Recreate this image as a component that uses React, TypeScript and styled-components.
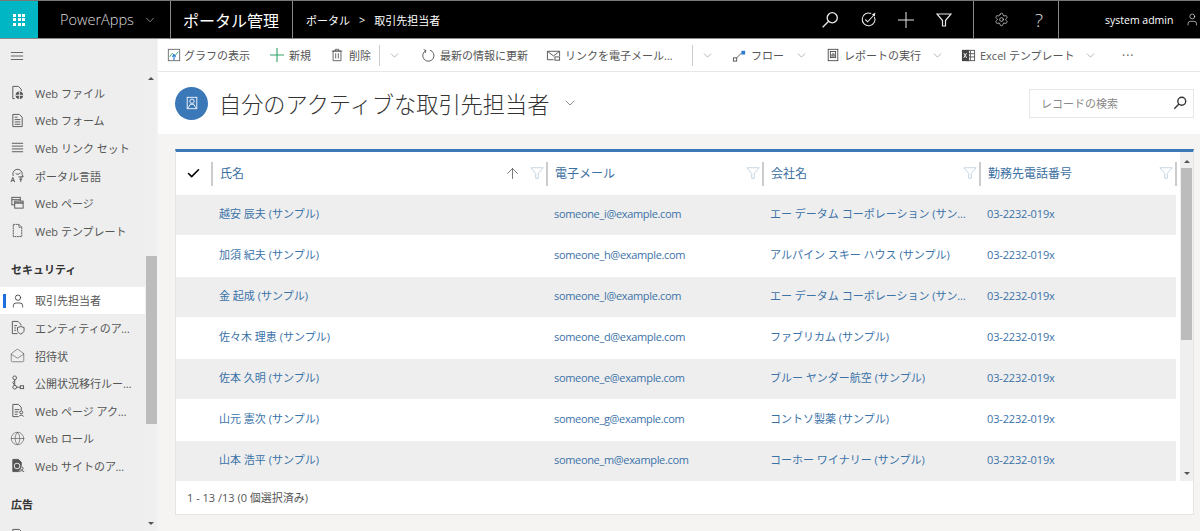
import React, { ReactElement, ReactNode } from 'react'
import styled, { createGlobalStyle } from 'styled-components'
import { ArrowUp, Check, ChevronDown, Globe, MailOpen, Settings, User } from 'lucide-react'

const FONT = `"Open Sans", "Noto Sans CJK JP", sans-serif`

const Global = createGlobalStyle`
  html, body { margin: 0; padding: 0; height: 100%; overflow: hidden; }
  body { font-family: ${FONT}; background: #f5f4f3; }
  * { box-sizing: border-box; }
`

const Page = styled.div`
  width: 1200px;
  height: 531px;
  display: flex;
  flex-direction: column;
  overflow: hidden;
`

// ---- top bar
const TopBar = styled.header`
  height: 39px;
  flex: none;
  display: flex;
  align-items: stretch;
  background: #000;
  color: #fff;
  border-top: 1px solid #777;
  border-bottom: 1px solid #888;
`
const Waffle = styled.div`
  width: 38px;
  background: #00b5c4;
  display: grid;
  grid-template-columns: repeat(3, 3px);
  grid-auto-rows: 3px;
  gap: 1.5px;
  place-content: center;
  i { background: #fff; }
`
const AppName = styled.div`
  width: 133px;
  padding-left: 22px;
  display: flex;
  align-items: center;
  gap: 9px;
  font-size: 14.5px;
  color: #ddd;
  font-weight: 300;
  border-right: 1px solid #888;
`
const PortalTitle = styled.div`
  width: 122px;
  padding-left: 12px;
  display: flex;
  align-items: center;
  font-size: 16px;
  border-right: 1px solid #888;
`
const Crumbs = styled.div`
  flex: 1;
  padding-left: 13px;
  display: flex;
  align-items: center;
  font-size: 11px;
  gap: 9px;
`
const TopIcons = styled.div<{ $w: number; $left: number; $right: number }>`
  width: ${p => p.$w}px;
  padding: 0 ${p => p.$right}px 0 ${p => p.$left}px;
  display: flex;
  align-items: center;
  justify-content: flex-end;
  border-right: 1px solid #888;
`
const TopBtn = styled.div`
  width: 38px;
  flex: none;
  display: flex;
  align-items: center;
  justify-content: center;
  color: #e8e8e8;
`
const Help = styled.span`
  font-size: 19px;
  font-weight: 300;
  color: #ddd;
`
const UserBox = styled.div`
  width: 141px;
  padding-left: 46px;
  display: flex;
  align-items: center;
  gap: 12px;
  font-size: 10.5px;
  white-space: nowrap;
`

// ---- body
const Body = styled.div`
  flex: 1;
  min-height: 0;
  display: flex;
`
const Sidebar = styled.nav`
  width: 158px;
  flex: none;
  display: flex;
  flex-direction: column;
  background: #eee;
  border-right: 1px solid #f5f4f3;
`
const Burger = styled.div`
  height: 33px;
  flex: none;
  padding-left: 10px;
  display: flex;
  align-items: center;
  color: #555;
`
const SideScroll = styled.div`
  flex: 1;
  min-height: 0;
  display: flex;
`
const SideList = styled.div`
  width: 145px;
  padding-top: 7px;
  overflow: hidden;
`
const SideItem = styled.div<{ $active?: boolean }>`
  position: relative;
  height: 27.6px;
  padding-left: 35px;
  display: flex;
  align-items: center;
  font-size: 11px;
  color: #555;
  background: ${p => (p.$active ? '#fff' : 'transparent')};
  svg {
    position: absolute;
    left: 10px;
    top: 6px;
  }
  ${p => (p.$active ? `&::before {
    content: '';
    position: absolute;
    left: 3px;
    top: 7px;
    width: 3px;
    height: 14px;
    background: #1d6fe0;
  }` : '')}
`
const SideLabel = styled.span`
  display: block;
  max-width: 97px;
  white-space: nowrap;
  overflow: hidden;
  text-overflow: ellipsis;
`
const SideSection = styled.div`
  height: 42px;
  padding: 16px 0 0 11px;
  font-size: 11px;
  font-weight: 700;
  color: #333;
`
const ScrollTrack = styled.div<{ $w: number; $gap?: number }>`
  width: ${p => p.$w}px;
  margin-left: ${p => p.$gap ?? 0}px;
  flex: none;
  display: flex;
  flex-direction: column;
  align-items: center;
  background: #efefef;
`
const ScrollArrow = styled.div<{ $down?: boolean; $space: number }>`
  height: 0;
  width: 0;
  border-left: 3px solid transparent;
  border-right: 3px solid transparent;
  ${p => (p.$down
    ? `border-top: 3px solid #555; margin-bottom: ${p.$space}px;`
    : `border-bottom: 3px solid #555; margin-top: ${p.$space}px;`)}
`
const ScrollThumb = styled.div<{ $top: number; $h: number; $w: number }>`
  width: ${p => p.$w}px;
  height: ${p => p.$h}px;
  margin-top: ${p => p.$top}px;
  background: #bcbcbc;
`
const Spring = styled.div`
  flex: 1;
`

const Main = styled.main`
  flex: 1;
  min-width: 0;
  display: flex;
  flex-direction: column;
`
const CommandBar = styled.div`
  height: 33px;
  flex: none;
  display: flex;
  align-items: center;
  background: #fff;
  border-bottom: 1px solid #e6e6e6;
  font-size: 11px;
  color: #555;
  padding-left: 9px;
`
const Cmd = styled.div<{ $w: number; $gap?: number }>`
  width: ${p => p.$w}px;
  flex: none;
  display: flex;
  align-items: center;
  gap: ${p => p.$gap ?? 4}px;
  white-space: nowrap;
`
const CmdDivider = styled.div<{ $w: number }>`
  width: ${p => p.$w}px;
  flex: none;
  height: 21px;
  border-left: 1px solid #ccc;
  display: flex;
  align-items: center;
  padding-left: 8px;
  color: #888;
`
const More = styled.span`
  font-size: 12px;
  letter-spacing: 1px;
  color: #555;
`
const TitleBar = styled.div`
  height: 62px;
  flex: none;
  background: #fff;
  padding: 0 6px 0 17px;
  display: flex;
  align-items: center;
`
const Avatar = styled.div`
  width: 33px;
  height: 33px;
  border-radius: 50%;
  background: #3b78b8;
  display: flex;
  align-items: center;
  justify-content: center;
  margin-right: 11px;
`
const Title = styled.h1`
  margin: 0 13px 0 0;
  font-size: 22.2px;
  font-weight: 300;
  color: #333;
  white-space: nowrap;
`
const SearchBox = styled.div`
  margin-left: auto;
  width: 165px;
  height: 29px;
  border: 1px solid #e6e6e6;
  padding: 0 6px 0 11px;
  display: flex;
  align-items: center;
  justify-content: space-between;
  font-size: 11px;
  color: #888;
`
const Content = styled.div`
  flex: 1;
  min-height: 0;
  padding: 15px 6px 16px 17px;
`
const Panel = styled.section`
  height: 100%;
  display: flex;
  flex-direction: column;
  background: #fff;
  border: 1px solid #e4e4e4;
  border-top: 3px solid #3b78b8;
`
const TableRow = styled.div`
  flex: 1;
  min-height: 0;
  display: flex;
`
const TableArea = styled.div`
  width: 1001px;
  flex: none;
  overflow: hidden;
`
const ROW_COLS = '35px 335px 216px 217px 1fr'
const HeadRow = styled.div`
  height: 43px;
  display: grid;
  grid-template-columns: ${ROW_COLS};
  align-items: center;
`
const CheckHead = styled.div`
  padding-left: 10px;
  color: #000;
  display: flex;
`
const HeadCell = styled.div<{ $end?: boolean }>`
  height: 24px;
  border-left: 2px solid #ccc;
  padding: 0 2px 1px 7px;
  display: flex;
  align-items: center;
  font-size: 12px;
  color: #3b6f9f;
  ${p => (p.$end ? 'border-right: 2px solid #ccc;' : '')}
`
const SortArrow = styled.div`
  margin-left: auto;
  margin-right: 9px;
  display: flex;
  color: #444;
`
const FilterIcon = styled.div<{ $first?: boolean }>`
  ${p => (p.$first ? '' : 'margin-left: auto;')}
  display: flex;
  color: #bfd0dd;
`
const DataRow = styled.div<{ $odd: boolean }>`
  height: 40px;
  margin: 0 1px 1px 0;
  display: grid;
  grid-template-columns: ${ROW_COLS};
  align-items: center;
  background: ${p => (p.$odd ? '#eeeeee' : '#fff')};
  font-size: 11px;
  color: #3b72a8;
`
const DataCell = styled.div<{ $tight?: number }>`
  padding: 0 10px 4px 8px;
  white-space: nowrap;
  overflow: hidden;
  text-overflow: ellipsis;
  letter-spacing: ${p => p.$tight ?? 0}px;
`
const Footer = styled.div`
  height: 33px;
  flex: none;
  padding: 0 0 2px 11px;
  display: flex;
  align-items: center;
  font-size: 11px;
  color: #555;
`

// ---- drawings
const Ic = ({ children, size = 15, sw = 1 }: { children: ReactNode; size?: number; sw?: number }): ReactElement => (
  <svg width={size} height={size} viewBox="0 0 16 16" fill="none" stroke="currentColor" strokeWidth={sw}>
    {children}
  </svg>
)

const sideIcons: { [key: string]: ReactNode } = {
  file: <><path d="M5 14.5H3V1.5h6l3 3v2" /><circle cx="10" cy="11" r="4" fill="currentColor" stroke="none" /><path d="M6 11h8M10 7v8" stroke="#eee" /></>,
  form: <><path d="M3 1.5h7l3 3v10H3z" /><path d="M5 7h6M5 9.5h6M5 12h6M5 4.5h3" /></>,
  lines: <path d="M2 3.5h12M2 6.5h12M2 9.5h12M2 12.5h12" />,
  lang: <><path d="M3.500 8.500a5 5 0 1 1 9.500-1.500l1 2h-1.500" /><path d="M6 6c1.500 1 4 1 5-1" /><path d="M1 15l2-5 2 5M1.800 13.500h2.400" /><path d="M9 9.500h5M11.500 9.500v5.500M10 12h3" /></>,
  page: <><rect x="2" y="2.5" width="9" height="8" /><path d="M2 5h9" /><rect x="5" y="6.5" width="9" height="7.5" fill="#eee" /><path d="M5 8.5h9" strokeWidth="1.5" /></>,
  template: <path d="M3.5 14.5V1.5h6l3 3v10zM9.5 1.5v3h3" strokeDasharray="2 0.6" />,
  entity: <><path d="M8 14.5H2.5v-13h6l3 3V6" /><path d="M4.5 6h3M4.5 8.5h2M4.5 11h2" /><path d="M8 8l3.5-1 3.5 1v3c0 2-1.5 3-3.5 4-2-1-3.5-2-3.5-4z" fill="#eee" /></>,
  flow: <><circle cx="5" cy="3" r="2" /><circle cx="5" cy="13" r="2" /><rect x="11" y="11.5" width="3.5" height="3" /><path d="M5 5v6M7 13h4M5 6l-2 2 2 3" /></>,
  access: <><path d="M9 14.5H3v-13h6l3 3V8" /><path d="M5 7h5M5 9.5h4M5 12h3" /><circle cx="12" cy="10" r="1.6" /><path d="M9.5 14.5c.3-2 4.700-2 5 0" /></>,
  siteAccess: <><path d="M3 1.5h6l3 3V8l-3 6.500H3z" fill="currentColor" /><circle cx="7.500" cy="8.500" r="3" stroke="#eee" /><circle cx="12.500" cy="11" r="1.500" /><path d="M10 15c.3-2 4.700-2 5 0" /></>
}

const chart = (
  <Ic size={14}>
    <rect x="1.500" y="1.500" width="13" height="13" stroke="#666" />
    <path d="M3 10l3-4 3 3 4-5" stroke="#2fa36b" />
    <path d="M8 14V8M6 10l2-2.500L10 10" stroke="#2b7cd3" strokeWidth="1.300" />
  </Ic>
)
const bigPlus = (
  <svg width="14" height="14" viewBox="0 0 14 14" stroke="#2fa36b" strokeWidth="1.100">
    <path d="M0 7h14M7 0v14" />
  </svg>
)
const trash = (
  <Ic size={14}>
    <path d="M3.500 3.500h9v11h-9zM2 3.500h12M6 3.500V1.500h4v2M6.500 6v6M9.500 6v6" />
  </Ic>
)
const refresh = (
  <Ic size={15}>
    <path d="M9.500 2.300A6 6 0 1 1 5 2.800" />
    <path d="M2.800 1.500L5.300 2.800 4.500 5.300" />
  </Ic>
)
const mailLink = (
  <Ic size={15}>
    <path d="M8 12.500H1.500v-9h13v5" />
    <path d="M1.500 3.500L8 8.500l6.500-5" />
    <rect x="9.500" y="9.500" width="5" height="3.500" />
  </Ic>
)
const flow = (
  <Ic size={15}>
    <rect x="1.500" y="10.500" width="3.500" height="3.500" stroke="#555" />
    <path d="M5 10.500l5-5" stroke="#555" />
    <rect x="10" y="3" width="4" height="4" fill="#2b7cd3" stroke="none" />
  </Ic>
)
const report = (
  <Ic size={14}>
    <rect x="2.500" y="1.500" width="11" height="13" stroke="#444" />
    <rect x="5" y="4" width="6" height="7" stroke="#444" />
    <path d="M6.800 10V7M8 10V5.500M9.300 10V6.500" stroke="#444" />
  </Ic>
)
const excel = (
  <Ic size={15}>
    <rect x="6" y="2.500" width="8.500" height="11" stroke="#555" />
    <path d="M10 2.500v11M6 6h8.500M6 9.500h8.500" stroke="#555" />
    <rect x="1" y="2" width="7.500" height="12" fill="#444" stroke="none" />
    <path d="M3 5.500l3 5M6 5.500l-3 5" stroke="#fff" />
  </Ic>
)
const topSearch = (
  <Ic size={18} sw={1.200}>
    <circle cx="10" cy="6" r="4.500" />
    <path d="M6.800 9.200L1.500 14.500" />
  </Ic>
)
const target = (
  <Ic size={17}>
    <path d="M10.500 2.400A6 6 0 1 0 13.600 5.500" />
    <path d="M5 8l2.200 2.200L13 4" />
    <path d="M11 3.500L14.500 1.500l-.5 3.500z" fill="currentColor" stroke="none" />
  </Ic>
)
const topPlus = (
  <Ic size={16}>
    <path d="M0 8h16M8 0v16" />
  </Ic>
)
const topFilter = (
  <Ic size={16} sw={1.200}>
    <path d="M1 2h14L9.500 8.500V14h-3V8.500z" />
  </Ic>
)
const searchSmall = (
  <span style={{ color: '#333', display: 'flex' }}>
    <Ic size={14} sw={1.600}>
      <circle cx="10" cy="6" r="4.500" />
      <path d="M6.800 9.200L1.500 14.500" />
    </Ic>
  </span>
)
const filter = (
  <Ic size={14}>
    <path d="M1 2h14L9.500 8.500V14h-3V8.500z" />
  </Ic>
)
const contactAvatar = (
  <svg width="14" height="14" viewBox="0 0 16 16" fill="none" stroke="#fff" strokeWidth="1">
    <rect x="2.500" y="1.500" width="11" height="13" />
    <circle cx="8" cy="6" r="2.500" />
    <path d="M3.500 13.500l2.500-4h4l2.500 4" />
  </svg>
)
const burger = (
  <Ic size={14}>
    <path d="M1 4h14M1 8h14M1 12h14" />
  </Ic>
)

const side1 = [
  { key: 'file', label: 'Web ファイル' },
  { key: 'form', label: 'Web フォーム' },
  { key: 'lines', label: 'Web リンク セット' },
  { key: 'lang', label: 'ポータル言語' },
  { key: 'page', label: 'Web ページ' },
  { key: 'template', label: 'Web テンプレート' }
]
const side2 = [
  { key: 'user', label: '取引先担当者', active: true },
  { key: 'entity', label: 'エンティティのアクセス許可' },
  { key: 'mail', label: '招待状' },
  { key: 'flow', label: '公開状況移行ルール設定' },
  { key: 'access', label: 'Web ページ アクセス制御ルール' },
  { key: 'globe', label: 'Web ロール' },
  { key: 'siteAccess', label: 'Web サイトのアクセス許可' }
]

const sideIcon = (key: string): ReactNode => {
  if (key === 'user') return <User size={16} strokeWidth={1.2} color="#333" />
  if (key === 'mail') return <MailOpen size={15} strokeWidth={1} />
  if (key === 'globe') return <Globe size={15} strokeWidth={1} />
  return <Ic>{sideIcons[key]}</Ic>
}

const rows = [
  ['越安 辰夫 (サンプル)', 'someone_i@example.com', 'エー データム コーポレーション (サンプル)'],
  ['加須 紀夫 (サンプル)', 'someone_h@example.com', 'アルパイン スキー ハウス (サンプル)'],
  ['金 起成 (サンプル)', 'someone_l@example.com', 'エー データム コーポレーション (サンプル)'],
  ['佐々木 理恵 (サンプル)', 'someone_d@example.com', 'ファブリカム (サンプル)'],
  ['佐本 久明 (サンプル)', 'someone_e@example.com', 'ブルー ヤンダー航空 (サンプル)'],
  ['山元 憲次 (サンプル)', 'someone_g@example.com', 'コントソ製薬 (サンプル)'],
  ['山本 浩平 (サンプル)', 'someone_m@example.com', 'コーホー ワイナリー (サンプル)']
]

const chevron = <ChevronDown size={13} strokeWidth={1} color="#777" />

export default (): ReactElement => (
  <Page>
    <Global />
    <TopBar>
      <Waffle>{Array.from({ length: 9 }, (_, i) => <i key={i} />)}</Waffle>
      <AppName>PowerApps <ChevronDown size={14} strokeWidth={1} /></AppName>
      <PortalTitle>ポータル管理</PortalTitle>
      <Crumbs>ポータル <span>&gt;</span> 取引先担当者</Crumbs>
      <TopIcons $w={162} $left={0} $right={10}>
        <TopBtn>{topSearch}</TopBtn>
        <TopBtn>{target}</TopBtn>
        <TopBtn>{topPlus}</TopBtn>
        <TopBtn>{topFilter}</TopBtn>
      </TopIcons>
      <TopIcons $w={85} $left={9} $right={0}>
        <TopBtn><Settings size={15} strokeWidth={1.1} /></TopBtn>
        <TopBtn><Help>?</Help></TopBtn>
      </TopIcons>
      <UserBox>system admin <User size={17} strokeWidth={1} /></UserBox>
    </TopBar>
    <Body>
      <Sidebar>
        <Burger>{burger}</Burger>
        <SideScroll>
          <SideList>
            {side1.map(t => <SideItem key={t.key}>{sideIcon(t.key)}<SideLabel>{t.label}</SideLabel></SideItem>)}
            <SideSection>セキュリティ</SideSection>
            {side2.map(t => <SideItem key={t.key} $active={t.active}>{sideIcon(t.key)}<SideLabel>{t.label}</SideLabel></SideItem>)}
            <SideSection>広告</SideSection>
            <SideItem>{sideIcon('form')}<SideLabel>広告</SideLabel></SideItem>
          </SideList>
          <ScrollTrack $w={12}>
            <ScrollArrow $space={5} />
            <ScrollThumb $top={176} $h={168} $w={11} />
            <Spring />
            <ScrollArrow $down $space={6} />
          </ScrollTrack>
        </SideScroll>
      </Sidebar>
      <Main>
        <CommandBar>
          <Cmd $w={103} $gap={3}>{chart}グラフの表示</Cmd>
          <Cmd $w={60} $gap={5}>{bigPlus}新規</Cmd>
          <Cmd $w={49} $gap={5}>{trash}削除</Cmd>
          <CmdDivider $w={42}>{chevron}</CmdDivider>
          <Cmd $w={125}>{refresh}最新の情報に更新</Cmd>
          <Cmd $w={146}>{mailLink}リンクを電子メール...</Cmd>
          <CmdDivider $w={40}>{chevron}</CmdDivider>
          <Cmd $w={63}>{flow}フロー</Cmd>
          <Cmd $w={31}>{chevron}</Cmd>
          <Cmd $w={105}>{report}レポートの実行</Cmd>
          <Cmd $w={30}>{chevron}</Cmd>
          <Cmd $w={123}>{excel}Excel テンプレート</Cmd>
          <Cmd $w={38}>{chevron}</Cmd>
          <More>···</More>
        </CommandBar>
        <TitleBar>
          <Avatar>{contactAvatar}</Avatar>
          <Title>自分のアクティブな取引先担当者</Title>
          <ChevronDown size={16} strokeWidth={1} color="#555" />
          <SearchBox>レコードの検索{searchSmall}</SearchBox>
        </TitleBar>
        <Content>
          <Panel>
            <TableRow>
              <TableArea>
                <HeadRow>
                  <CheckHead><Check size={15} strokeWidth={2.5} /></CheckHead>
                  <HeadCell>氏名<SortArrow><ArrowUp size={17} strokeWidth={1} /></SortArrow><FilterIcon $first>{filter}</FilterIcon></HeadCell>
                  <HeadCell>電子メール<FilterIcon>{filter}</FilterIcon></HeadCell>
                  <HeadCell>会社名<FilterIcon>{filter}</FilterIcon></HeadCell>
                  <HeadCell $end>勤務先電話番号<FilterIcon>{filter}</FilterIcon></HeadCell>
                </HeadRow>
                {rows.map((r, i) => (
                  <DataRow key={r[1]} $odd={i % 2 === 0}>
                    <span />
                    <DataCell>{r[0]}</DataCell>
                    <DataCell $tight={-0.33}>{r[1]}</DataCell>
                    <DataCell>{r[2]}</DataCell>
                    <DataCell $tight={-0.15}>03-2232-019x</DataCell>
                  </DataRow>
                ))}
              </TableArea>
              <ScrollTrack $w={13} $gap={3}>
                <ScrollArrow $space={8} />
                <ScrollThumb $top={5} $h={172} $w={11} />
                <Spring />
                <ScrollArrow $down $space={6} />
              </ScrollTrack>
            </TableRow>
            <Footer>1 - 13 /13 (0 個選択済み)</Footer>
          </Panel>
        </Content>
      </Main>
    </Body>
  </Page>
)
